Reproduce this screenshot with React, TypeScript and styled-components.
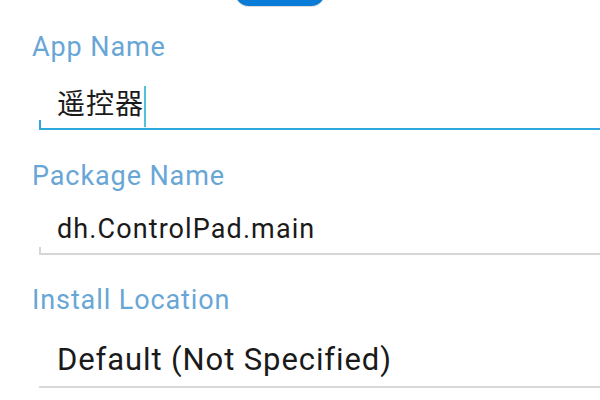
import React from "react";
import styled, { createGlobalStyle } from "styled-components";

const Global = createGlobalStyle`
  html, body { margin: 0; padding: 0; background: #ffffff; }
  body { font-family: Roboto, "Noto Sans", "Noto Sans CJK SC", sans-serif; overflow: hidden; }
`;

const Page = styled.div`
  width: 600px;
  height: 400px;
  overflow: hidden;
  background: #ffffff;
  display: flex;
  flex-direction: column;
`;

const TopButton = styled.div`
  width: 90px;
  height: 30px;
  margin-top: -24px;
  margin-left: 235px;
  border-radius: 14px;
  background: #0a7bd6;
  box-shadow: 0 1px 1px rgba(0, 0, 0, 0.15);
`;

const Field = styled.div<{ $top: number }>`
  display: flex;
  flex-direction: column;
  margin-top: ${(p) => p.$top}px;
`;

const Label = styled.div<{ $gap: number }>`
  font-size: 27px;
  line-height: 32px;
  height: 32px;
  letter-spacing: 0.9px;
  color: #68a6d6;
  padding-left: 32px;
  margin-bottom: ${(p) => p.$gap}px;
`;

const ValueBox = styled.div<{
  $line: string;
  $tick: number;
  $pad: number;
  $size: number;
  $lh: number;
  $ls: number;
}>`
  position: relative;
  margin-left: 39px;
  padding-left: 18px;
  padding-bottom: ${(p) => p.$pad}px;
  border-bottom: 2px solid ${(p) => p.$line};
  font-size: ${(p) => p.$size}px;
  line-height: ${(p) => p.$lh}px;
  height: ${(p) => p.$lh}px;
  letter-spacing: ${(p) => p.$ls}px;
  color: #1a1a1a;
  white-space: nowrap;
  &::before {
    content: "";
    display: ${(p) => (p.$tick > 0 ? "block" : "none")};
    position: absolute;
    left: 0;
    bottom: -2px;
    width: 2px;
    height: ${(p) => p.$tick}px;
    background: ${(p) => p.$line};
  }
`;

const CjkText = styled.span`
  font-family: "Noto Sans CJK SC", "Noto Sans", sans-serif;
  font-size: 28px;
  letter-spacing: 1px;
  vertical-align: 3px;
`;

const Cursor = styled.span`
  display: inline-block;
  width: 2px;
  height: 41px;
  margin-left: 0px;
  background: #52c2d8;
  vertical-align: -10px;
`;

export default function App() {
  return (
    <Page>
      <Global />
      <TopButton />
      <Field $top={25}>
        <Label $gap={23}>App Name</Label>
        <ValueBox $line="#2fa9dd" $tick={10} $pad={10} $size={27} $lh={32} $ls={1.5}>
          <CjkText>遥控器</CjkText>
          <Cursor />
        </ValueBox>
      </Field>
      <Field $top={30}>
        <Label $gap={21}>Package Name</Label>
        <ValueBox $line="#d6d6d6" $tick={8} $pad={8} $size={27} $lh={32} $ls={1.1}>
          dh.ControlPad.main
        </ValueBox>
      </Field>
      <Field $top={29}>
        <Label $gap={26}>Install Location</Label>
        <ValueBox $line="#d9d9d9" $tick={0} $pad={8} $size={31} $lh={36} $ls={0.9}>
          Default (Not Specified)
        </ValueBox>
      </Field>
    </Page>
  );
}
